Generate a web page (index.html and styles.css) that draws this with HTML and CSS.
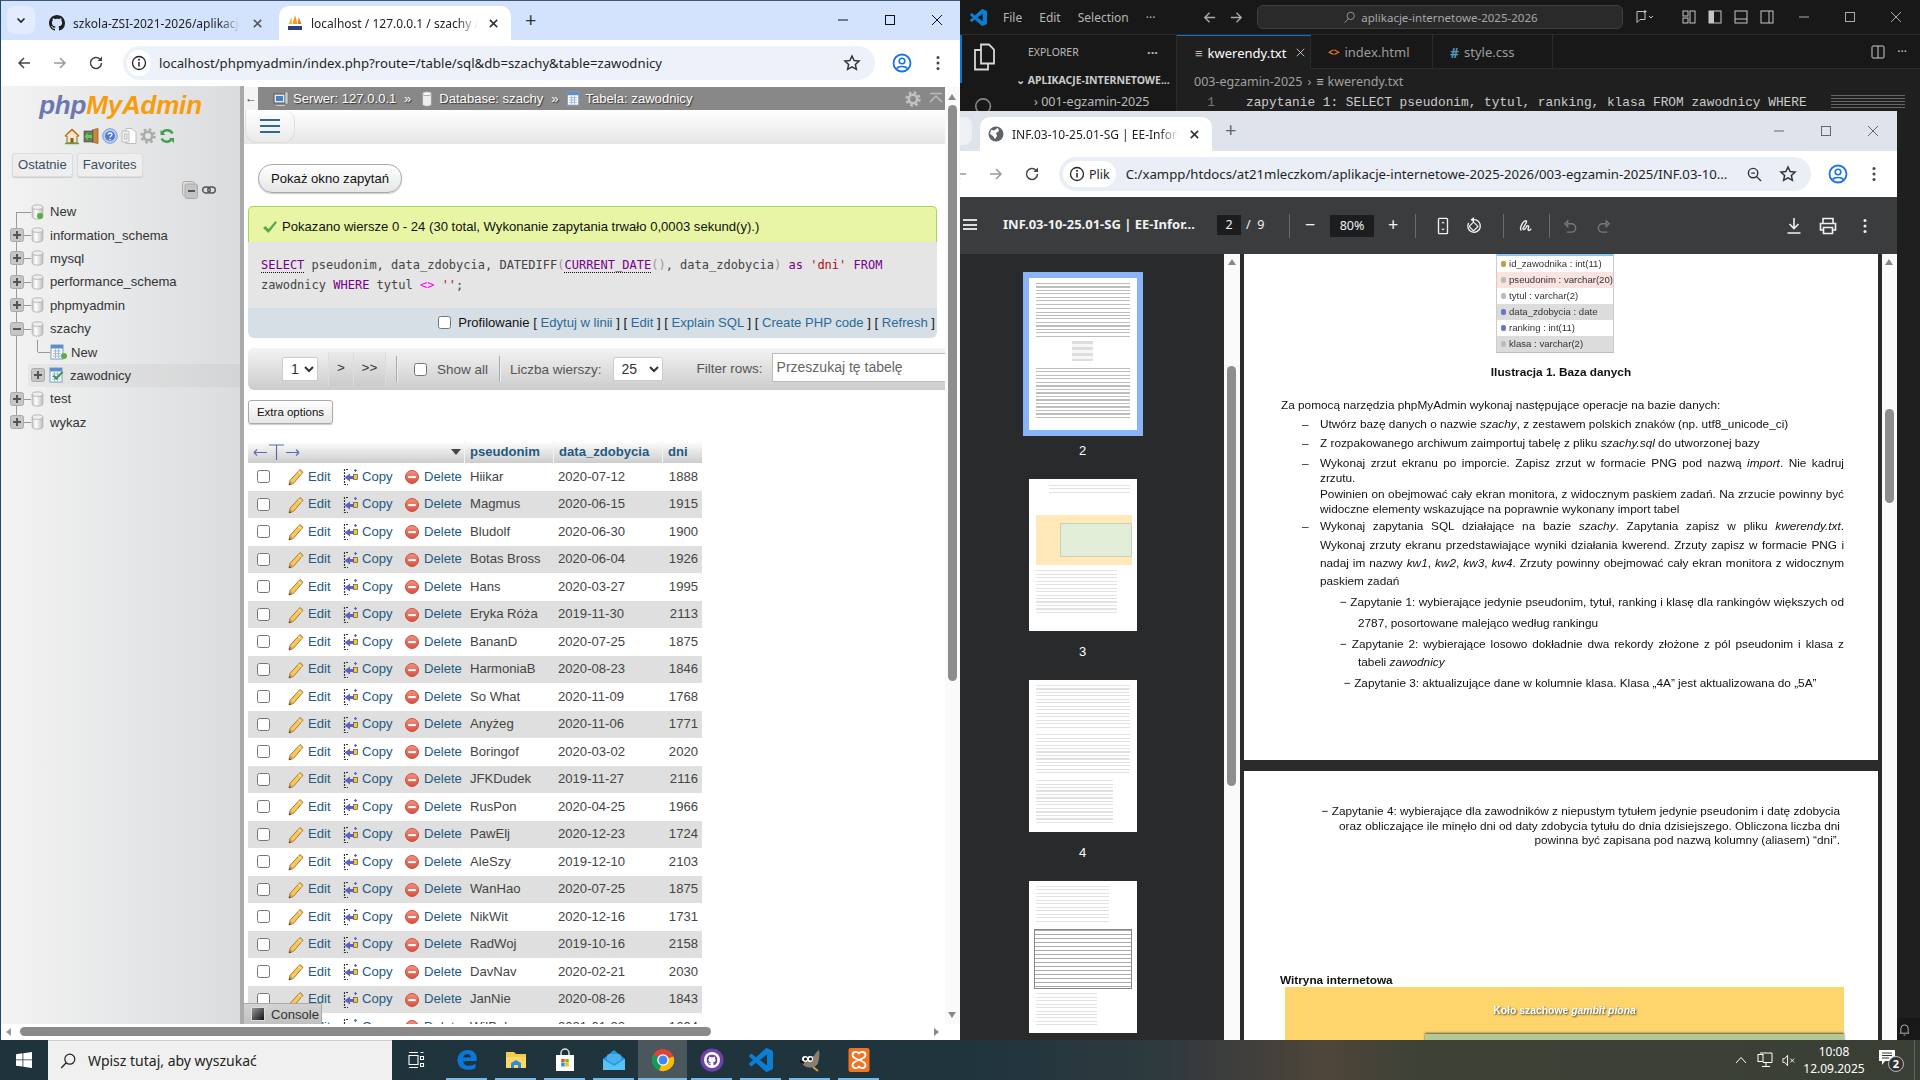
FILE: index.html
```html
<!DOCTYPE html>
<html lang="pl">
<head>
<meta charset="utf-8">
<title>Pulpit</title>
<link rel="stylesheet" href="styles.css">
</head>
<body>
<svg class="defs" width="0" height="0" aria-hidden="true">
  <defs>
    <linearGradient id="gDb" x1="0" x2="1" y1="0" y2="0"><stop offset="0" stop-color="#c9c9c9"/><stop offset=".35" stop-color="#fff"/><stop offset="1" stop-color="#bdbdbd"/></linearGradient>
    <linearGradient id="gRed" x1="0" x2="0" y1="0" y2="1"><stop offset="0" stop-color="#f0907f"/><stop offset="1" stop-color="#d9503f"/></linearGradient>
    <symbol id="pencil" viewBox="0 0 16 18"><path d="M12 1.5l3 2.8L5.3 15.5 1 17l1-4.6z" fill="#f6c95a" stroke="#a9782f" stroke-width="1"/><path d="M10.5 3.5l3 2.8" stroke="#fff0b8"/><path d="M1 17l1-4.6 3.3 3.1z" fill="#c89a66"/><path d="M1 17l.5-2 1.6 1.4z" fill="#4b3517"/></symbol>
    <symbol id="copy" viewBox="0 0 15 18"><path d="M5 1.5H1.5v15H5" fill="none" stroke="#333" stroke-width="1.2" stroke-dasharray="2 1"/><path d="M1.5 9.5l5.5-4v2.5h4v3H7v2.500z" fill="#5f5fd0"/><rect x="10.500" y="6.500" width="4" height="5" fill="#fcc72e" stroke="#555" stroke-width=".7"/><path d="M12.500 1v3M11 2.500h3" stroke="#5f5fd0" stroke-width="1.200"/></symbol>
    <symbol id="del" viewBox="0 0 15 15"><circle cx="7.500" cy="7.500" r="7" fill="url(#gRed)" stroke="#c9503f"/><rect x="3.500" y="6.500" width="8" height="2.200" fill="#fff"/></symbol>
    <symbol id="db" viewBox="0 0 14 18"><path d="M1 3.500v11c0 1.500 2.700 2.500 6 2.500s6-1 6-2.500v-11z" fill="url(#gDb)" stroke="#b0b0b0"/><ellipse cx="7" cy="3.500" rx="6" ry="2.500" fill="#efefef" stroke="#b0b0b0"/></symbol>
    <symbol id="plus-box" viewBox="0 0 14 14"><rect x=".5" y=".5" width="13" height="13" rx="2" fill="#c6c6c6" stroke="#aaa"/><path d="M3 7h8M7 3v8" stroke="#555" stroke-width="2"/></symbol>
    <symbol id="minus-box" viewBox="0 0 14 14"><rect x=".5" y=".5" width="13" height="13" rx="2" fill="#c6c6c6" stroke="#aaa"/><path d="M3 7h8" stroke="#555" stroke-width="2"/></symbol>
    <symbol id="sheet" viewBox="0 0 16 17"><rect x="1" y="1" width="12" height="14" fill="#fff" stroke="#7d9cc0"/><rect x="1" y="1" width="12" height="3.500" fill="#5c8fd0"/><path d="M3 7h8M3 9.500h8M3 12h8M5.500 5v9M8.500 5v9" stroke="#9db6d6"/></symbol>
    <symbol id="gear" viewBox="0 0 16 16"><circle cx="8" cy="8" r="4.200" fill="none" stroke="currentColor" stroke-width="2.600"/><circle cx="8" cy="8" r="6.500" fill="none" stroke="currentColor" stroke-width="2.400" stroke-dasharray="2.550 2.550"/></symbol>
    <symbol id="i-back" viewBox="0 0 16 16"><path d="M14 8H3M8 3L3 8l5 5" fill="none" stroke="currentColor" stroke-width="1.500"/></symbol>
    <symbol id="i-fwd" viewBox="0 0 16 16"><path d="M2 8h11M8 3l5 5-5 5" fill="none" stroke="currentColor" stroke-width="1.500"/></symbol>
    <symbol id="i-reload" viewBox="0 0 16 16"><path d="M13.500 8a5.500 5.500 0 1 1-1.600-3.900" fill="none" stroke="currentColor" stroke-width="1.500"/><path d="M14 1.500V6H9.500z" fill="currentColor"/></symbol>
    <symbol id="i-star" viewBox="0 0 16 16"><path d="M8 1.800l1.900 4 4.400.5-3.300 3 .9 4.400L8 11.500l-3.900 2.200.9-4.400-3.300-3 4.400-.5z" fill="none" stroke="currentColor" stroke-width="1.300"/></symbol>
    <symbol id="i-info" viewBox="0 0 16 16"><circle cx="8" cy="8" r="6.500" fill="none" stroke="currentColor" stroke-width="1.300"/><path d="M8 7v4.500" stroke="currentColor" stroke-width="1.500"/><circle cx="8" cy="4.800" r="1" fill="currentColor"/></symbol>
    <symbol id="i-profile" viewBox="0 0 20 20"><circle cx="10" cy="10" r="8.500" fill="#fff" stroke="#1a73e8" stroke-width="1.800"/><circle cx="10" cy="8" r="2.800" fill="none" stroke="#1a73e8" stroke-width="1.600"/><path d="M4.800 15.500c1.500-2.600 8.900-2.600 10.400 0" fill="none" stroke="#1a73e8" stroke-width="1.600"/></symbol>
    <symbol id="i-dots" viewBox="0 0 4 16"><circle cx="2" cy="2.500" r="1.500" fill="currentColor"/><circle cx="2" cy="8" r="1.500" fill="currentColor"/><circle cx="2" cy="13.500" r="1.500" fill="currentColor"/></symbol>
    <symbol id="i-x" viewBox="0 0 12 12"><path d="M2 2l8 8M10 2l-8 8" stroke="currentColor" stroke-width="1.700"/></symbol>
    <symbol id="i-win-x" viewBox="0 0 12 12"><path d="M1 1l10 10M11 1L1 11" stroke="currentColor" stroke-width="1"/></symbol>
    <symbol id="vs" viewBox="0 0 24 24"><path fill="#0a7fd4" d="M23.150 2.587L18.210.21a1.494 1.494 0 0 0-1.705.29l-9.460 8.630-4.120-3.128a.999.999 0 0 0-1.276.057L.327 7.261A1 1 0 0 0 .326 8.740L3.899 12 .326 15.260a1 1 0 0 0 .001 1.479L1.650 17.940a.999.999 0 0 0 1.276.057l4.120-3.128 9.460 8.630a1.492 1.492 0 0 0 1.704.29l4.942-2.377A1.500 1.500 0 0 0 24 20.060V3.939a1.500 1.500 0 0 0-.85-1.352zm-5.146 14.861L10.826 12l7.178-5.448v10.896z"/></symbol>
    <symbol id="gh" viewBox="0 0 16 16"><path d="M8 0C3.580 0 0 3.580 0 8c0 3.540 2.290 6.530 5.470 7.590.4.070.55-.17.55-.38 0-.19-.01-.82-.01-1.490-2.010.370-2.530-.490-2.690-.940-.090-.230-.480-.940-.820-1.130-.280-.150-.680-.520-.010-.530.630-.010 1.080.580 1.230.820.720 1.210 1.870.870 2.330.660.070-.520.280-.870.510-1.070-1.780-.2-3.640-.890-3.640-3.950 0-.870.310-1.590.820-2.150-.080-.2-.360-1.020.080-2.120 0 0 .670-.210 2.200.820.640-.180 1.320-.270 2-.270.680 0 1.360.090 2 .270 1.530-1.040 2.200-.820 2.200-.820.440 1.100.160 1.920.080 2.120.510.560.820 1.270.820 2.150 0 3.070-1.870 3.750-3.650 3.950.290.250.540.730.540 1.480 0 1.070-.010 1.930-.010 2.200 0 .210.150.460.550.380A8.013 8.013 0 0016 8c0-4.420-3.580-8-8-8z"/></symbol>
    <symbol id="pma" viewBox="0 0 16 16"><path d="M8 0l2.500 9H5.500z" fill="#f59a1b"/><path d="M4.500 2L5 9H1.500z" fill="#f9b34a"/><path d="M11.500 2L14.500 9H11z" fill="#e4761a"/><rect x="1" y="11" width="14" height="4" fill="#2b3f7c"/></symbol>
    <symbol id="cyl" viewBox="0 0 12 18"><path d="M1 3v12c0 1.400 2.200 2.200 5 2.200s5-.8 5-2.200V3z" fill="#eee" stroke="#999"/><ellipse cx="6" cy="3" rx="5" ry="2.200" fill="#fff" stroke="#999"/></symbol>
  </defs>
</svg>

<div class="desktop">

  <!-- Visual Studio Code behind the browsers -->
  <section class="win-code">
    <header class="code-title">
      <svg class="code-logo"><use href="#vs"/></svg>
      <span class="code-menu">File</span><span class="code-menu">Edit</span><span class="code-menu">Selection</span><span class="code-menu">···</span>
      <svg class="code-nav first"><use href="#i-back"/></svg>
      <svg class="code-nav"><use href="#i-fwd"/></svg>
      <div class="command"><svg class="cmd-search" viewBox="0 0 16 16"><circle cx="9.500" cy="6" r="4.500" fill="none" stroke="currentColor"/><path d="M6.500 9.500L2 14.500" stroke="currentColor"/></svg>aplikacje-internetowe-2025-2026</div>
      <div class="code-layout">
        <svg viewBox="0 0 20 16" class="lay wide"><path d="M3 2.500h6l2 1v7H6l-3 3zM11 1v3M9.500 2.500h3" fill="none" stroke="currentColor"/><path d="M19 7l-2 2-2-2" fill="none" stroke="currentColor"/></svg>
        <svg viewBox="0 0 16 16" class="lay"><rect x="2" y="2" width="5" height="5" fill="none" stroke="currentColor"/><rect x="2" y="9" width="5" height="5" fill="none" stroke="currentColor"/><rect x="9" y="2" width="5" height="12" fill="none" stroke="currentColor"/></svg>
        <svg viewBox="0 0 16 16" class="lay"><rect x="2" y="2" width="12" height="12" fill="none" stroke="currentColor"/><rect x="2" y="2" width="5" height="12" fill="currentColor"/></svg>
        <svg viewBox="0 0 16 16" class="lay"><rect x="2" y="2" width="12" height="12" fill="none" stroke="currentColor"/><path d="M2 10h12" stroke="currentColor"/></svg>
        <svg viewBox="0 0 16 16" class="lay"><rect x="2" y="2" width="12" height="12" fill="none" stroke="currentColor"/><path d="M10 2v12" stroke="currentColor"/></svg>
      </div>
      <div class="code-ctl">
        <svg viewBox="0 0 12 12"><path d="M1 6h10" stroke="currentColor"/></svg>
        <svg viewBox="0 0 12 12"><rect x="1.500" y="1.500" width="9" height="9" fill="none" stroke="currentColor"/></svg>
        <svg viewBox="0 0 12 12"><path d="M1 1l10 10M11 1L1 11" stroke="currentColor"/></svg>
      </div>
    </header>
    <div class="code-body">
      <aside class="code-activity">
        <svg class="act-files" viewBox="0 0 24 28"><path d="M9 1.500h8l5 5v14H9zM9 7H3v19.500h13v-6" fill="none" stroke="#d7d7d7" stroke-width="1.800"/></svg>
        <svg class="act-search" viewBox="0 0 24 24"><circle cx="11" cy="10" r="8" fill="none" stroke="#868686" stroke-width="1.800"/></svg>
      </aside>
      <aside class="code-side">
        <div class="side-head"><span>EXPLORER</span><span class="side-dots">···</span></div>
        <div class="side-proj">⌄ APLIKACJE-INTERNETOWE...</div>
        <div class="side-item">› 001-egzamin-2025</div>
      </aside>
      <div class="code-main">
        <div class="code-tabs">
          <div class="ctab active"><span class="txt-ic">≡</span>kwerendy.txt<svg class="ctab-x"><use href="#i-win-x"/></svg></div>
          <div class="ctab t2"><span class="html-ic">&lt;&gt;</span>index.html</div>
          <div class="ctab t3"><span class="css-ic">#</span>style.css</div>
          <div class="ctab-rest"><svg viewBox="0 0 14 14" class="split"><rect x="1" y="1" width="12" height="12" rx="1" fill="none" stroke="currentColor"/><path d="M7 1v12" stroke="currentColor"/></svg><span>···</span></div>
        </div>
        <div class="code-crumb">003-egzamin-2025 <span class="crumb-sep">›</span> <span class="txt-ic">≡</span> kwerendy.txt</div>
        <div class="code-line"><span class="ln-no">1</span><span>zapytanie 1: SELECT pseudonim, tytul, ranking, klasa FROM zawodnicy WHERE</span><span class="minimap"></span></div>
      </div>
    </div>
    <div class="code-bell"><svg viewBox="0 0 12 14"><path d="M2 10V6a4 4 0 0 1 8 0v4l1 1H1zM5 13h2" fill="none" stroke="#bbb"/></svg></div>
  </section>

  <!-- Right browser: PDF -->
  <section class="chrome win-pdf">
    <div class="tabstrip inactive">
      <div class="tab-menu"></div>
      <div class="tab tab-pdf">
        <svg class="fav" viewBox="0 0 16 16"><circle cx="8" cy="8" r="7.500" fill="#5f6368"/><path d="M3 4c2 0 3 1 4 0s2-2 3-2l1 3-3 2 1 3-2 3-2-3-3-2z" fill="#fff"/></svg>
        <span class="tab-title">INF.03-10-25.01-SG | EE-Inform</span>
        <svg class="tab-x"><use href="#i-x"/></svg>
      </div>
      <span class="tab-plus dim">+</span>
      <div class="win-ctl dim">
        <svg viewBox="0 0 12 12"><path d="M1 6h10" stroke="currentColor"/></svg>
        <svg viewBox="0 0 12 12"><rect x="1.500" y="1.500" width="9" height="9" fill="none" stroke="currentColor"/></svg>
        <svg viewBox="0 0 12 12"><use href="#i-win-x"/></svg>
      </div>
    </div>
    <div class="toolbar">
      <svg class="tb back gray"><use href="#i-back"/></svg>
      <svg class="tb fwd gray"><use href="#i-fwd"/></svg>
      <svg class="tb rel"><use href="#i-reload"/></svg>
      <div class="omni omni-pdf">
        <span class="chip"><svg><use href="#i-info"/></svg>Plik</span>
        <span class="url">C:/xampp/htdocs/at21mleczkom/aplikacje-internetowe-2025-2026/003-egzamin-2025/INF.03-10...</span>
        <svg class="omni-zoom" viewBox="0 0 16 16"><circle cx="6.500" cy="6.500" r="5" fill="none" stroke="currentColor" stroke-width="1.500"/><path d="M10 10l5 5M4.500 6.500h4" stroke="currentColor" stroke-width="1.500"/></svg>
        <svg class="omni-star"><use href="#i-star"/></svg>
      </div>
      <svg class="tb-profile"><use href="#i-profile"/></svg>
      <svg class="tb-dots"><use href="#i-dots"/></svg>
    </div>
    <div class="pdfbar">
      <span class="pdf-burger"></span>
      <span class="pdf-title">INF.03-10-25.01-SG | EE-Infor...</span>
      <span class="pdf-page">2</span><span class="pdf-of">/ &nbsp;9</span>
      <i class="pdf-sep s1"></i>
      <span class="pdf-btn pm">−</span><span class="pdf-zoom">80%</span><span class="pdf-btn pp">+</span>
      <i class="pdf-sep s2"></i>
      <svg class="pdf-ic a1" viewBox="0 0 16 20"><rect x="3" y="1.500" width="10" height="17" rx="1" fill="none" stroke="currentColor" stroke-width="1.500"/><path d="M8 5l-2 2h4zM8 15l-2-2h4z" fill="currentColor"/></svg>
      <svg class="pdf-ic a2" viewBox="0 0 20 20"><path d="M10 3a7 7 0 1 1-6 3.500" fill="none" stroke="currentColor" stroke-width="1.500"/><path d="M10 0v6L6 3z" fill="currentColor"/><rect x="6" y="7" width="7" height="7" transform="rotate(45 9.500 10.500)" fill="none" stroke="currentColor" stroke-width="1.300"/></svg>
      <i class="pdf-sep s3"></i>
      <svg class="pdf-ic a3" viewBox="0 0 20 20"><path d="M6 15c-3-2 2-11 5-11 2 0-1 5-3 8-1 2 1 3 3 0 1-2 2-3 3-2 1 1-2 4 0 5 1 0 2-1 3-2" fill="none" stroke="currentColor" stroke-width="1.500"/></svg>
      <i class="pdf-sep s4"></i>
      <svg class="pdf-ic a4 faint" viewBox="0 0 16 16"><path d="M2 5l3-3v6zM5 5h4a4 4 0 0 1 0 9H4" fill="none" stroke="currentColor" stroke-width="1.500"/></svg>
      <svg class="pdf-ic a5 faint" viewBox="0 0 16 16"><path d="M14 5l-3-3v6zM11 5H7a4 4 0 0 0 0 9h5" fill="none" stroke="currentColor" stroke-width="1.500"/></svg>
      <svg class="pdf-ic a6" viewBox="0 0 16 18"><path d="M8 1v10M3.500 7L8 11.500 12.500 7M1.500 16h13" fill="none" stroke="currentColor" stroke-width="1.600"/></svg>
      <svg class="pdf-ic a7" viewBox="0 0 18 18"><path d="M4 6V1.500h10V6M4 13H1.500V6.500h15V13H14M4.500 10.500h9v6h-9z" fill="none" stroke="currentColor" stroke-width="1.600"/></svg>
      <svg class="pdf-ic a8"><use href="#i-dots"/></svg>
    </div>
    <div class="pdf-body">
      <aside class="thumbs">
        <div class="thumb current">
          <div class="tpage"><div class="tl dark tl-a"></div><div class="tl dark tl-a2"></div><div class="ttable"></div><div class="tl dark tl-b"></div></div>
        </div>
        <div class="tnum">2</div>
        <div class="thumb">
          <div class="tpage"><div class="tl tl-c"></div><div class="tyellow"><div class="tgreen"></div></div><div class="tl tl-d"></div></div>
        </div>
        <div class="tnum">3</div>
        <div class="thumb">
          <div class="tpage"><div class="tl tl-e"></div><div class="tl tl-e2"></div><div class="tl tl-e3"></div></div>
        </div>
        <div class="tnum">4</div>
        <div class="thumb">
          <div class="tpage"><div class="tl tl-f"></div><div class="tgrid"></div><div class="tl tl-g"></div></div>
        </div>
      </aside>
      <div class="vbar narrow"><span class="arr-up"></span><span class="thumb-bar tb1"></span></div>
      <main class="pages">
        <article class="page page1">
          <div class="schema">
            <div class="sc"><i class="k1"></i>id_zawodnika : int(11)</div>
            <div class="sc pink"><i></i>pseudonim : varchar(20)</div>
            <div class="sc"><i></i>tytul : varchar(2)</div>
            <div class="sc grey"><i class="k2"></i>data_zdobycia : date</div>
            <div class="sc"><i class="k2"></i>ranking : int(11)</div>
            <div class="sc grey"><i></i>klasa : varchar(2)</div>
          </div>
          <p class="caption">Ilustracja 1. Baza danych</p>
          <p class="ln lead">Za pomocą narzędzia phpMyAdmin wykonaj następujące operacje na bazie danych:</p>
          <p class="ln g4 li">Utwórz bazę danych o nazwie <em>szachy</em>, z zestawem polskich znaków (np. utf8_unicode_ci)</p>
          <p class="ln g5 li">Z rozpakowanego archiwum zaimportuj tabelę z pliku <em>szachy.sql</em> do utworzonej bazy</p>
          <p class="ln g6 li just">Wykonaj zrzut ekranu po imporcie. Zapisz zrzut w formacie PNG pod nazwą <em>import</em>. Nie kadruj</p>
          <p class="ln g1 cont">zrzutu.</p>
          <p class="ln g2 cont just">Powinien on obejmować cały ekran monitora, z widocznym paskiem zadań. Na zrzucie powinny być</p>
          <p class="ln g1 cont">widoczne elementy wskazujące na poprawnie wykonany import tabel</p>
          <p class="ln g3 li just">Wykonaj zapytania SQL działające na bazie <em>szachy</em>. Zapytania zapisz w pliku <em>kwerendy.txt</em>.</p>
          <p class="ln g5 cont just">Wykonaj zrzuty ekranu przedstawiające wyniki działania kwerend. Zrzuty zapisz w formacie PNG i</p>
          <p class="ln g4 cont just">nadaj im nazwy <em>kw1</em>, <em>kw2</em>, <em>kw3</em>, <em>kw4</em>. Zrzuty powinny obejmować cały ekran monitora z widocznym</p>
          <p class="ln g4 cont">paskiem zadań</p>
          <p class="ln g7 q1 just">− Zapytanie 1: wybierające jedynie pseudonim, tytuł, ranking i klasę dla rankingów większych od</p>
          <p class="ln g7 q2">2787, posortowane malejąco według rankingu</p>
          <p class="ln g7 q1 just">− Zapytanie 2: wybierające losowo dokładnie dwa rekordy złożone z pól pseudonim i klasa z</p>
          <p class="ln g4 q2">tabeli <em>zawodnicy</em></p>
          <p class="ln g7 q3">− Zapytanie 3: aktualizujące dane w kolumnie klasa. Klasa „4A” jest aktualizowana do „5A”</p>
        </article>
        <article class="page page2">
          <p class="ln right r1">− Zapytanie 4: wybierające dla zawodników z niepustym tytułem jedynie pseudonim i datę zdobycia</p>
          <p class="ln right g1">oraz obliczające ile minęło dni od daty zdobycia tytułu do dnia dzisiejszego. Obliczona liczba dni</p>
          <p class="ln right g0">powinna być zapisana pod nazwą kolumny (aliasem) “dni”.</p>
          <p class="ln witryna">Witryna internetowa</p>
          <div class="shot">
            <div class="shot-title">Koło szachowe <em>gambit piona</em></div>
            <div class="shot-green"></div>
          </div>
        </article>
      </main>
      <div class="vbar"><span class="arr-up"></span><span class="thumb-bar tb2"></span></div>
    </div>
  </section>

  <!-- Left browser: phpMyAdmin -->
  <section class="chrome win-left">
    <div class="tabstrip">
      <div class="tab-menu"><svg viewBox="0 0 12 12"><path d="M2.500 4.500L6 8l3.500-3.500" fill="none" stroke="#222" stroke-width="1.600"/></svg></div>
      <div class="tab tab-gh">
        <svg class="fav"><use href="#gh"/></svg>
        <span class="tab-title">szkola-ZSI-2021-2026/aplikacje</span>
        <svg class="tab-x"><use href="#i-x"/></svg>
      </div>
      <div class="tab tab-active">
        <svg class="fav"><use href="#pma"/></svg>
        <span class="tab-title">localhost / 127.0.0.1 / szachy / z</span>
        <svg class="tab-x"><use href="#i-x"/></svg>
      </div>
      <span class="tab-plus">+</span>
      <div class="win-ctl">
        <svg viewBox="0 0 12 12"><path d="M1 6h10" stroke="currentColor"/></svg>
        <svg viewBox="0 0 12 12"><rect x="1.500" y="1.500" width="9" height="9" fill="none" stroke="currentColor"/></svg>
        <svg viewBox="0 0 12 12"><use href="#i-win-x"/></svg>
      </div>
    </div>
    <div class="toolbar">
      <svg class="tb back"><use href="#i-back"/></svg>
      <svg class="tb fwd gray"><use href="#i-fwd"/></svg>
      <svg class="tb rel"><use href="#i-reload"/></svg>
      <div class="omni">
        <span class="chip round"><svg><use href="#i-info"/></svg></span>
        <span class="url">localhost/phpmyadmin/index.php?route=/table/sql&amp;db=szachy&amp;table=zawodnicy</span>
        <svg class="omni-star"><use href="#i-star"/></svg>
      </div>
      <svg class="tb-profile"><use href="#i-profile"/></svg>
      <svg class="tb-dots"><use href="#i-dots"/></svg>
    </div>

    <div class="viewport">
      <div class="viewport-row">
        <nav class="pma-nav">
          <div class="logo"><span class="l-php">php</span><span class="l-my">MyAdmin</span></div>
          <div class="nav-icons">
            <svg viewBox="0 0 16 16"><path d="M1 8l7-6.500L15 8h-2v7H3V8z" fill="#f5e6c8" stroke="#9a6a2a"/><path d="M1 8l7-6.500L15 8" fill="none" stroke="#c0701f" stroke-width="1.500"/><path d="M1 15.500h14" stroke="#5da03a" stroke-width="1.500"/><rect x="6.500" y="10" width="3" height="5" fill="#8a6030"/></svg>
            <svg viewBox="0 0 16 16"><path d="M9 2l6-1.500v15L9 14z" fill="#c88a3a" stroke="#8a5a1a" stroke-width=".7"/><rect x="1" y="3" width="9" height="11" fill="#6a7a5a" stroke="#444" stroke-width=".6"/><path d="M8 8.500H2M5 5L1.500 8.500 5 12V10h4V7H5z" fill="#5fcf4f"/></svg>
            <svg viewBox="0 0 16 16"><circle cx="8" cy="8" r="7.300" fill="#b9cdf0" stroke="#7f9bd0"/><circle cx="8" cy="8" r="5" fill="#4f7bd0"/><path d="M6 6.500C6 4.500 10 4.500 10 6.500c0 1.500-2 1.500-2 3" fill="none" stroke="#fff" stroke-width="1.300"/><circle cx="8" cy="11.500" r=".8" fill="#fff"/></svg>
            <svg viewBox="0 0 16 16"><path d="M5 .5h6l4 4v11H5z" fill="#fff" stroke="#bbb"/><rect x="1" y="3" width="7" height="11" rx="1" fill="#f4f4f4" stroke="#bbb"/><rect x="3.500" y="6" width="2.500" height="5" fill="none" stroke="#bbb"/></svg>
            <svg class="g-nav"><use href="#gear"/></svg>
            <svg viewBox="0 0 16 16"><path d="M13.500 5.500A6 6 0 0 0 3 5M2.500 10.500A6 6 0 0 0 12 12" fill="none" stroke="#3fa24a" stroke-width="2.500"/><path d="M1.500 2v5h5zM15 15v-5h-5z" fill="#3fa24a"/></svg>
          </div>
          <div class="nav-tabs"><span class="ntab">Ostatnie</span><span class="ntab">Favorites</span></div>
          <div class="nav-tools">
            <svg class="ct" viewBox="0 0 16 18"><rect x=".5" y=".5" width="12" height="14" rx="2" fill="#ddd" stroke="#aaa"/><rect x="3" y="3" width="12.500" height="14.500" rx="2" fill="#c4c4c4" stroke="#aaa"/><path d="M6 10h7" stroke="#555" stroke-width="2"/></svg>
            <svg class="lk" viewBox="0 0 14 10"><rect x=".7" y="2" width="7.500" height="6" rx="3" fill="none" stroke="#555" stroke-width="1.400"/><rect x="5.800" y="2" width="7.500" height="6" rx="3" fill="none" stroke="#555" stroke-width="1.400"/></svg>
          </div>
          <ul class="tree">
            <li class="t-row"><span class="t-box"></span><svg class="t-db"><use href="#db"/></svg><span class="t-plus"></span><a>New</a></li>
            <li class="t-row"><svg class="t-box"><use href="#plus-box"/></svg><svg class="t-db"><use href="#db"/></svg><a>information_schema</a></li>
            <li class="t-row"><svg class="t-box"><use href="#plus-box"/></svg><svg class="t-db"><use href="#db"/></svg><a>mysql</a></li>
            <li class="t-row"><svg class="t-box"><use href="#plus-box"/></svg><svg class="t-db"><use href="#db"/></svg><a>performance_schema</a></li>
            <li class="t-row"><svg class="t-box"><use href="#plus-box"/></svg><svg class="t-db"><use href="#db"/></svg><a>phpmyadmin</a></li>
            <li class="t-row"><svg class="t-box"><use href="#minus-box"/></svg><svg class="t-db"><use href="#db"/></svg><a>szachy</a></li>
            <li class="t-row sub"><svg class="t-sheet"><use href="#sheet"/></svg><span class="t-plus sm"></span><a>New</a></li>
            <li class="t-row sub sel"><svg class="t-box"><use href="#plus-box"/></svg><svg class="t-sheet tight"><use href="#sheet"/></svg><span class="t-check"></span><a>zawodnicy</a></li>
            <li class="t-row"><svg class="t-box"><use href="#plus-box"/></svg><svg class="t-db"><use href="#db"/></svg><a>test</a></li>
            <li class="t-row"><svg class="t-box"><use href="#plus-box"/></svg><svg class="t-db"><use href="#db"/></svg><a>wykaz</a></li>
          </ul>
        </nav>
        <div class="splitter"></div>
        <main class="pma-main">
          <div class="crumbs">
            <span class="crumb-back">←</span>
            <svg class="c-ic srv" viewBox="0 0 16 16"><rect x="1" y="3" width="11" height="9" fill="#dfe8f5" stroke="#555"/><rect x="3" y="5" width="7" height="5" fill="#4a7fc0"/><rect x="12" y="1" width="3" height="12" fill="#ccc" stroke="#777" stroke-width=".6"/><path d="M3 14.500h9" stroke="#ccc"/></svg>
            <span class="c-t c-srv">Serwer: 127.0.0.1</span><span class="c-sep">»</span>
            <svg class="c-ic dbi"><use href="#cyl"/></svg>
            <span class="c-t c-dbn">Database: szachy</span><span class="c-sep">»</span>
            <svg class="c-ic tbi"><use href="#sheet"/></svg>
            <span class="c-t">Tabela: zawodnicy</span>
            <svg class="c-gear"><use href="#gear"/></svg>
            <svg class="c-coll" viewBox="0 0 14 14"><path d="M1 1.500h12M1 10l6-6 6 6" fill="none" stroke="#bbb" stroke-width="1.500"/></svg>
          </div>
          <div class="menubar"><div class="burger"><i></i><i></i><i></i></div></div>
          <div class="pma-content">
            <button class="pill">Pokaż okno zapytań</button>
            <div class="msg-ok"><svg viewBox="0 0 16 14"><path d="M1 8l2.500-2 3 3L13.500 1 15 2.500 6.500 13z" fill="#5aa84a"/></svg>Pokazano wiersze 0 - 24 (30 total, Wykonanie zapytania trwało 0,0003 sekund(y).)</div>
            <div class="sql">
              <code><b class="kw u">SELECT</b> pseudonim, data_zdobycia, DATEDIFF<span class="par">(</span><b class="fn u">CURRENT_DATE</b><span class="par">()</span>, data_zdobycia<span class="par">)</span> <b class="kw">as</b> <span class="str">'dni'</span> <b class="kw">FROM</b></code>
              <code>zawodnicy <b class="kw">WHERE</b> tytul <span class="op">&lt;&gt;</span> <span class="str">''</span>;</code>
            </div>
            <div class="sql-links"><input type="checkbox" class="prof-cb"><span class="prof">Profilowanie</span> [ <a>Edytuj w linii</a> ] [ <a>Edit</a> ] [ <a>Explain SQL</a> ] [ <a>Create PHP code</a> ] [ <a>Refresh</a> ]</div>
            <div class="pager">
              <select class="sel-page"><option>1</option></select>
              <div class="pg-btns"><span>&gt;</span><span>&gt;&gt;</span></div>
              <i class="pg-sep sp1"></i>
              <input type="checkbox" class="pg-cb"><span class="pg-t">Show all</span>
              <i class="pg-sep sp2"></i>
              <span class="pg-t">Liczba wierszy:</span>
              <select class="sel-rows"><option>25</option></select>
              <span class="pg-t filter">Filter rows:</span>
              <input class="filter-in" placeholder="Przeszukaj tę tabelę">
            </div>
            <button class="extra">Extra options</button>
            <div class="grid">
              <div class="row head">
                <div class="h-actions"><svg class="t-arrows" viewBox="0 0 47 16"><path d="M1 8.500h13M1 8.500l3-3M1 8.500l3 3M33 8.500h13M46 8.500l-3-3M46 8.500l-3 3M16 1h15M23.500 1v15" fill="none" stroke="#5b6bb0" stroke-width="1.200"/></svg><i class="sort"></i></div>
                <div class="h-c">pseudonim</div><div class="h-c">data_zdobycia</div><div class="h-c">dni</div>
              </div>
              <div class="row"><div class="c-cb"><input type="checkbox"></div><a class="ac ed"><svg><use href="#pencil"/></svg>Edit</a><a class="ac cp"><svg><use href="#copy"/></svg>Copy</a><a class="ac dl"><svg><use href="#del"/></svg>Delete</a><span class="d n">Hiikar</span><span class="d dt">2020-07-12</span><span class="d num">1888</span></div>
              <div class="row"><div class="c-cb"><input type="checkbox"></div><a class="ac ed"><svg><use href="#pencil"/></svg>Edit</a><a class="ac cp"><svg><use href="#copy"/></svg>Copy</a><a class="ac dl"><svg><use href="#del"/></svg>Delete</a><span class="d n">Magmus</span><span class="d dt">2020-06-15</span><span class="d num">1915</span></div>
              <div class="row"><div class="c-cb"><input type="checkbox"></div><a class="ac ed"><svg><use href="#pencil"/></svg>Edit</a><a class="ac cp"><svg><use href="#copy"/></svg>Copy</a><a class="ac dl"><svg><use href="#del"/></svg>Delete</a><span class="d n">Bludolf</span><span class="d dt">2020-06-30</span><span class="d num">1900</span></div>
              <div class="row"><div class="c-cb"><input type="checkbox"></div><a class="ac ed"><svg><use href="#pencil"/></svg>Edit</a><a class="ac cp"><svg><use href="#copy"/></svg>Copy</a><a class="ac dl"><svg><use href="#del"/></svg>Delete</a><span class="d n">Botas Bross</span><span class="d dt">2020-06-04</span><span class="d num">1926</span></div>
              <div class="row"><div class="c-cb"><input type="checkbox"></div><a class="ac ed"><svg><use href="#pencil"/></svg>Edit</a><a class="ac cp"><svg><use href="#copy"/></svg>Copy</a><a class="ac dl"><svg><use href="#del"/></svg>Delete</a><span class="d n">Hans</span><span class="d dt">2020-03-27</span><span class="d num">1995</span></div>
              <div class="row"><div class="c-cb"><input type="checkbox"></div><a class="ac ed"><svg><use href="#pencil"/></svg>Edit</a><a class="ac cp"><svg><use href="#copy"/></svg>Copy</a><a class="ac dl"><svg><use href="#del"/></svg>Delete</a><span class="d n">Eryka Róża</span><span class="d dt">2019-11-30</span><span class="d num">2113</span></div>
              <div class="row"><div class="c-cb"><input type="checkbox"></div><a class="ac ed"><svg><use href="#pencil"/></svg>Edit</a><a class="ac cp"><svg><use href="#copy"/></svg>Copy</a><a class="ac dl"><svg><use href="#del"/></svg>Delete</a><span class="d n">BananD</span><span class="d dt">2020-07-25</span><span class="d num">1875</span></div>
              <div class="row"><div class="c-cb"><input type="checkbox"></div><a class="ac ed"><svg><use href="#pencil"/></svg>Edit</a><a class="ac cp"><svg><use href="#copy"/></svg>Copy</a><a class="ac dl"><svg><use href="#del"/></svg>Delete</a><span class="d n">HarmoniaB</span><span class="d dt">2020-08-23</span><span class="d num">1846</span></div>
              <div class="row"><div class="c-cb"><input type="checkbox"></div><a class="ac ed"><svg><use href="#pencil"/></svg>Edit</a><a class="ac cp"><svg><use href="#copy"/></svg>Copy</a><a class="ac dl"><svg><use href="#del"/></svg>Delete</a><span class="d n">So What</span><span class="d dt">2020-11-09</span><span class="d num">1768</span></div>
              <div class="row"><div class="c-cb"><input type="checkbox"></div><a class="ac ed"><svg><use href="#pencil"/></svg>Edit</a><a class="ac cp"><svg><use href="#copy"/></svg>Copy</a><a class="ac dl"><svg><use href="#del"/></svg>Delete</a><span class="d n">Anyżeg</span><span class="d dt">2020-11-06</span><span class="d num">1771</span></div>
              <div class="row"><div class="c-cb"><input type="checkbox"></div><a class="ac ed"><svg><use href="#pencil"/></svg>Edit</a><a class="ac cp"><svg><use href="#copy"/></svg>Copy</a><a class="ac dl"><svg><use href="#del"/></svg>Delete</a><span class="d n">Boringof</span><span class="d dt">2020-03-02</span><span class="d num">2020</span></div>
              <div class="row"><div class="c-cb"><input type="checkbox"></div><a class="ac ed"><svg><use href="#pencil"/></svg>Edit</a><a class="ac cp"><svg><use href="#copy"/></svg>Copy</a><a class="ac dl"><svg><use href="#del"/></svg>Delete</a><span class="d n">JFKDudek</span><span class="d dt">2019-11-27</span><span class="d num">2116</span></div>
              <div class="row"><div class="c-cb"><input type="checkbox"></div><a class="ac ed"><svg><use href="#pencil"/></svg>Edit</a><a class="ac cp"><svg><use href="#copy"/></svg>Copy</a><a class="ac dl"><svg><use href="#del"/></svg>Delete</a><span class="d n">RusPon</span><span class="d dt">2020-04-25</span><span class="d num">1966</span></div>
              <div class="row"><div class="c-cb"><input type="checkbox"></div><a class="ac ed"><svg><use href="#pencil"/></svg>Edit</a><a class="ac cp"><svg><use href="#copy"/></svg>Copy</a><a class="ac dl"><svg><use href="#del"/></svg>Delete</a><span class="d n">PawElj</span><span class="d dt">2020-12-23</span><span class="d num">1724</span></div>
              <div class="row"><div class="c-cb"><input type="checkbox"></div><a class="ac ed"><svg><use href="#pencil"/></svg>Edit</a><a class="ac cp"><svg><use href="#copy"/></svg>Copy</a><a class="ac dl"><svg><use href="#del"/></svg>Delete</a><span class="d n">AleSzy</span><span class="d dt">2019-12-10</span><span class="d num">2103</span></div>
              <div class="row"><div class="c-cb"><input type="checkbox"></div><a class="ac ed"><svg><use href="#pencil"/></svg>Edit</a><a class="ac cp"><svg><use href="#copy"/></svg>Copy</a><a class="ac dl"><svg><use href="#del"/></svg>Delete</a><span class="d n">WanHao</span><span class="d dt">2020-07-25</span><span class="d num">1875</span></div>
              <div class="row"><div class="c-cb"><input type="checkbox"></div><a class="ac ed"><svg><use href="#pencil"/></svg>Edit</a><a class="ac cp"><svg><use href="#copy"/></svg>Copy</a><a class="ac dl"><svg><use href="#del"/></svg>Delete</a><span class="d n">NikWit</span><span class="d dt">2020-12-16</span><span class="d num">1731</span></div>
              <div class="row"><div class="c-cb"><input type="checkbox"></div><a class="ac ed"><svg><use href="#pencil"/></svg>Edit</a><a class="ac cp"><svg><use href="#copy"/></svg>Copy</a><a class="ac dl"><svg><use href="#del"/></svg>Delete</a><span class="d n">RadWoj</span><span class="d dt">2019-10-16</span><span class="d num">2158</span></div>
              <div class="row"><div class="c-cb"><input type="checkbox"></div><a class="ac ed"><svg><use href="#pencil"/></svg>Edit</a><a class="ac cp"><svg><use href="#copy"/></svg>Copy</a><a class="ac dl"><svg><use href="#del"/></svg>Delete</a><span class="d n">DavNav</span><span class="d dt">2020-02-21</span><span class="d num">2030</span></div>
              <div class="row"><div class="c-cb"><input type="checkbox"></div><a class="ac ed"><svg><use href="#pencil"/></svg>Edit</a><a class="ac cp"><svg><use href="#copy"/></svg>Copy</a><a class="ac dl"><svg><use href="#del"/></svg>Delete</a><span class="d n">JanNie</span><span class="d dt">2020-08-26</span><span class="d num">1843</span></div>
              <div class="row"><div class="c-cb"><input type="checkbox"></div><a class="ac ed"><svg><use href="#pencil"/></svg>Edit</a><a class="ac cp"><svg><use href="#copy"/></svg>Copy</a><a class="ac dl"><svg><use href="#del"/></svg>Delete</a><span class="d n">WilBak</span><span class="d dt">2021-01-23</span><span class="d num">1694</span></div>
            </div>
          </div>
          <div class="console"><i class="con-ic"></i>Console</div>
        </main>
        <div class="vbar main-v"><span class="arr-up"></span><span class="thumb-bar tb3"></span><span class="arr-down"></span></div>
      </div>
      <div class="hbar"><span class="arr-l"></span><span class="hthumb"></span><span class="arr-r"></span></div>
    </div>
  </section>

  <!-- Taskbar -->
  <footer class="taskbar">
    <svg class="start" viewBox="0 0 16 16"><path fill="#fff" d="M0 2.200L6.500 1.300v6.200H0zM7.300 1.200L16 0v7.500H7.300zM0 8.300h6.500v6.300L0 13.700zM7.300 8.300H16V16l-8.700-1.200z"/></svg>
    <div class="search"><svg viewBox="0 0 16 16"><circle cx="9.800" cy="6.200" r="5" fill="none" stroke="#222" stroke-width="1.200"/><path d="M6.200 9.800L1.200 15" stroke="#222" stroke-width="1.300"/></svg><span>Wpisz tutaj, aby wyszukać</span></div>
    <svg class="task-view" viewBox="0 0 16 18"><path d="M1 1.500h9M1 16.500h9M1 4.500h9v9H1zM12.500 1.500h3M12.500 5.500h3v3h-3zM12.500 12.500h3v3h-3z" fill="none" stroke="#fff" stroke-width="1.100"/></svg>
    <div class="apps">
      <span class="app pin"><svg viewBox="0 0 24 24"><path d="M21.500 13H8c.2 3 2.600 4.800 5.700 4.800 2.600 0 5-.8 6.800-2.200v4.300c-2.100 1.300-4.700 1.900-7.600 1.900C7 21.800 2.500 18.200 2.500 12.300 2.500 6 7.200 2 13 2c5.600 0 8.800 4 8.800 9.200zM15.800 9.500c0-2.200-1.300-3.600-3.300-3.600-2.100 0-3.800 1.400-4.300 3.600z" fill="#0a78d7"/></svg></span>
      <span class="app pin"><svg viewBox="0 0 24 24"><path d="M2 4h8l2 2h10v14H2z" fill="#f7c94a"/><path d="M2 9h20v11H2z" fill="#fbd76a"/><path d="M7 20v-5l5-3 5 3v5h-3v-3h-4v3z" fill="#2b8fd8"/></svg></span>
      <span class="app pin"><svg viewBox="0 0 24 24"><path d="M8 8V5a4 4 0 0 1 8 0v3" fill="none" stroke="#ddd" stroke-width="1.500"/><rect x="3" y="7" width="18" height="16" fill="#fff"/><rect x="8.200" y="11" width="3.500" height="3.500" fill="#f25022"/><rect x="12.300" y="11" width="3.500" height="3.500" fill="#7fba00"/><rect x="8.200" y="15" width="3.500" height="3.500" fill="#00a4ef"/><rect x="12.300" y="15" width="3.500" height="3.500" fill="#ffb900"/></svg></span>
      <span class="app pin"><svg viewBox="0 0 24 24"><path d="M1 11L12 2l11 9v11H1z" fill="#1e9ce8"/><path d="M1 11l11 7 11-7v11H1z" fill="#5cc2f5"/><path d="M5 6h14v6l-7 4-7-4z" fill="#fff" opacity=".2"/></svg></span>
      <span class="app active pin-wide"><svg viewBox="0 0 24 24"><circle cx="12" cy="12" r="11" fill="#db4437"/><path d="M12 12L22.500 8.500A11 11 0 0 1 8 22.300z" fill="#fbbc05"/><path d="M12 12L8 22.300A11 11 0 0 1 2.500 6.500z" fill="#0f9d58"/><circle cx="12" cy="12" r="5.800" fill="#fff"/><circle cx="12" cy="12" r="4.500" fill="#4285f4"/></svg></span>
      <span class="app pin"><svg viewBox="0 0 24 24"><circle cx="12" cy="12" r="11.500" fill="#6f42a8"/><circle cx="12" cy="12" r="8" fill="#fff"/><g transform="translate(6.500 6.500) scale(.69)"><use href="#gh" width="16" height="16" fill="#6f42a8"/></g></svg></span>
      <span class="app pin"><svg><use href="#vs"/></svg></span>
      <span class="app pin"><svg viewBox="0 0 24 24"><path d="M4 15c0-5 8-7 12-7 1-2 3-5 5-6 1 5 0 9-1 13-1 5-13 7-16 0z" fill="#8a7f6e"/><circle cx="7" cy="11" r="3" fill="#fff"/><circle cx="12" cy="11" r="3" fill="#fff"/><circle cx="7.500" cy="11" r="1.500" fill="#111"/><circle cx="12.500" cy="11" r="1.500" fill="#111"/><path d="M2 13l4 2" stroke="#111" stroke-width="2"/><path d="M15 19l5 4" stroke="#caa04a" stroke-width="2"/></svg></span>
      <span class="app pin"><svg viewBox="0 0 24 24"><rect x="1.500" y="0" width="21" height="24" rx="2" fill="#f07422"/><path d="M12 5.500C10 3 5.500 3.500 5.500 7c0 2.500 2.500 3.500 6.500 5 4 1.500 6.500 2.500 6.500 5 0 3.500-4.500 4-6.500 1.500C10 21 5.500 20.500 5.500 17c0-2.500 2.500-3.500 6.500-5 4-1.500 6.500-2.500 6.500-5 0-3.500-4.500-4-6.500-1.500z" fill="none" stroke="#fff" stroke-width="1.800"/></svg></span>
    </div>
    <div class="tray">
      <svg class="tr-up" viewBox="0 0 12 8"><path d="M1 7l5-5.500L11 7" fill="none" stroke="#fff"/></svg>
      <svg class="tr-net" viewBox="0 0 16 16"><path d="M3 1h12v9.500H6M9 10.500v4M5 14.500h8" fill="none" stroke="#fff"/><rect x="1" y="2.500" width="5" height="7" fill="none" stroke="#fff"/></svg>
      <svg class="tr-vol" viewBox="0 0 16 16"><path d="M2 6v4h2l3 3.500v-11L4 6z" fill="none" stroke="#fff"/><path d="M10 6l4 4M14 6l-4 4" stroke="#fff"/></svg>
      <div class="clock"><span>10:08</span><span>12.09.2025</span></div>
      <div class="notif"><svg viewBox="0 0 16 16"><path d="M0 0h16v11H6l-3 4v-4H0z" fill="#fff"/><path d="M3 3h10M3 5.500h10M3 8h7" stroke="#333"/></svg><span class="badge">2</span></div>
      <i class="showdesk"></i>
    </div>
  </footer>
</div>
</body>
</html>
```

FILE: styles.css
```css
*{box-sizing:border-box}
html,body{margin:0;padding:0;height:100%}
p{margin:0}
body{font-family:"Liberation Sans",Arial,sans-serif;font-size:13.1px;color:#444;overflow:hidden;background:#1f1f1f}
.defs{position:absolute}
svg{display:block;overflow:visible}
.desktop{position:relative;width:1920px;height:1080px;overflow:hidden}

/* VS Code */
.win-code{position:absolute;left:960px;top:0;width:960px;height:1040px;background:#1f1f1f;color:#ccc;font-family:"Noto Sans",sans-serif;font-size:12px}
.code-title{height:35px;background:#181818;border-bottom:1px solid #2b2b2b;display:flex;align-items:center;padding-left:10px;color:#b5b5b5}
.code-logo{width:17px;height:17px;margin-right:16px}
.code-menu{margin-right:17px;font-size:12px}
.code-nav{width:15px;height:15px;color:#aaa}
.code-nav.first{margin-left:30px;margin-right:12px}
.command{width:366px;height:24px;margin-left:13px;border:1px solid #3f3f3f;border-radius:6px;background:#2a2a2a;display:flex;align-items:center;justify-content:center;gap:5px;color:#a8a8a8;font-size:11.5px}
.cmd-search{width:13px;height:13px}
.code-layout{display:flex;align-items:center;gap:10px;margin-left:11px;color:#c5c5c5}
.lay{width:16px;height:16px}
.lay.wide{width:20px;margin-right:17px}
.code-ctl{display:flex;gap:34px;margin-left:auto;margin-right:18px;color:#aaa}
.code-ctl svg{width:12px;height:12px}
.code-body{display:flex;height:100px}
.code-activity{width:48px;background:#181818;position:relative;flex:none;display:flex;flex-direction:column;align-items:center;padding-top:8px}
.code-activity::before{content:"";position:absolute;left:0;top:0;width:2px;height:48px;background:#0078d4}
.act-files{width:24px;height:28px}
.act-search{width:22px;height:22px;margin-top:26px}
.code-side{width:169px;background:#181818;flex:none;border-right:1px solid #2b2b2b}
.side-head{display:flex;justify-content:space-between;padding:10px 18px 0 20px;font-size:10.5px;color:#bbb;height:37px}
.side-dots{font-size:13px;line-height:14px;font-weight:700}
.side-proj{font-weight:700;font-size:10.5px;padding-left:8px;white-space:nowrap;color:#ccc;line-height:16px}
.side-item{padding-left:26px;margin-top:5px;font-size:12.5px;color:#bbb}
.code-main{flex:1;min-width:0}
.code-tabs{display:flex;height:34px;background:#181818;border-bottom:1px solid #2b2b2b}
.ctab{display:flex;align-items:center;height:34px;border-right:1px solid #2b2b2b;padding-left:17px;font-size:13px;color:#9d9d9d;width:122px;gap:5px}
.ctab.active{width:134px;background:#1f1f1f;color:#fff;border-top:1px solid #0078d4;padding-left:18px}
.ctab.t3{width:120px}
.ctab-x{width:9px;height:9px;color:#eee;margin-left:5px}
.txt-ic{color:#bbb;font-weight:700}
.html-ic{color:#e37933;font-size:10px;font-weight:700}
.css-ic{color:#519aba;font-weight:700;font-size:14px}
.ctab-rest{flex:1;display:flex;justify-content:flex-end;align-items:center;gap:12px;padding-right:13px;color:#ccc}
.split{width:14px;height:14px}
.code-crumb{height:22px;display:flex;align-items:center;gap:4px;padding-left:17px;font-size:12.5px;color:#a0a0a0;margin-top:1px}
.crumb-sep{margin:0 1px}
.code-line{display:flex;align-items:center;font-family:"Liberation Mono",monospace;font-size:12.8px;height:20px;color:#ccc;white-space:nowrap}
.ln-no{width:69px;text-align:right;padding-right:31px;color:#777;flex:none}
.minimap{width:74px;height:14px;margin-left:24px;flex:none;background:repeating-linear-gradient(to bottom,#666 0 1px,transparent 1px 3px)}
.code-bell{position:absolute;right:0;top:1018px;width:23px;height:22px;background:#181818}
.code-bell svg{width:11px;height:13px;margin:5px 0 0 2px}

/* Chrome frame */
.chrome{position:absolute;top:0;width:960px;height:1040px;background:#fff;display:flex;flex-direction:column;font-family:"Noto Sans",sans-serif}
.win-left{left:0;border-left:1px solid #1d4a68;border-top:1px solid #3f5a70}
.win-pdf{left:937px;top:111px;height:929px}
.tabstrip{height:40px;flex:none;background:#d3e3fd;display:flex;align-items:flex-end;position:relative;color:#1f1f1f}
.win-left .tabstrip{height:39px}
.tabstrip.inactive{background:#dfe3eb}
.tab-menu{position:absolute;left:7px;top:6px;width:28px;height:28px;border-radius:8px;background:#e3ecfc;display:flex;align-items:center;justify-content:center}
.win-left .tab-menu{left:6px;top:5px}
.inactive .tab-menu{background:#eef0f4}
.tab-menu svg{width:12px;height:12px}
.tab{position:absolute;bottom:0;height:34px;display:flex;align-items:center;font-size:12px;color:#1f1f1f}
.tab-gh{left:48px;width:225px}
.tab-active,.tab-pdf{background:#fff;border-radius:10px 10px 0 0;width:232px}
.tab-active{left:278px}
.tab-pdf{left:43px}
.tab-active,.tab-pdf{padding-left:8px}
.fav{width:16px;height:16px;flex:none;fill:#1f1f1f}
.tab-title{margin-left:8px;width:167px;overflow:hidden;white-space:nowrap;font-size:12px;-webkit-mask-image:linear-gradient(to right,#000 88%,transparent);mask-image:linear-gradient(to right,#000 88%,transparent)}
.tab-x{width:11px;height:11px;margin-left:10px;color:#333;flex:none}
.tab-gh .tab-x{margin-left:12px;color:#555}
.tab-plus{position:absolute;left:521px;top:3px;font-size:20px;color:#333;line-height:28px}
.win-left .tab-plus{left:524px;top:5px}
.win-pdf .tab-plus{left:288px;top:5px}
.tab-plus.dim,.win-ctl.dim{color:#666}
.win-ctl{position:absolute;right:18px;top:14px;display:flex;gap:35px;color:#111}
.win-left .win-ctl{right:17px;top:13px}
.win-ctl svg{width:12px;height:12px}
.toolbar{height:46px;flex:none;background:#fff;display:flex;align-items:center;position:relative;padding-left:15px}
.tb{width:16px;height:16px;color:#444;margin-right:20px;flex:none}
.tb.gray{color:#9a9a9a}
.omni{position:relative;margin-left:-1px;width:752px;height:34px;border-radius:17px;background:#edf2fa;display:flex;align-items:center;padding-left:4px;flex:none;color:#333}
.omni-pdf{background:#eaeef7}
.chip{background:#fff;border-radius:13px;height:26px;display:flex;align-items:center;gap:4px;padding:0 6px;font-size:12.5px;color:#222;flex:none}
.chip svg{width:16px;height:16px}
.chip.round{width:24px;padding:0;justify-content:center}
.url{margin-left:8px;font-size:13.2px;color:#1f1f1f;white-space:nowrap}
.omni-pdf .url{margin-left:10px}
.omni-star{width:18px;height:18px;margin-left:auto;margin-right:14px;color:#333}
.omni-zoom{width:15px;height:15px;margin-left:auto;color:#333;margin-right:17px}
.omni-pdf .omni-star{margin-left:0;margin-right:14px}
.tb-profile{width:20px;height:20px;margin-left:17px;flex:none}
.tb-dots{width:4px;height:16px;margin-left:24px;color:#444;flex:none}

/* phpMyAdmin layout */
.viewport{flex:1;min-height:0;display:flex;flex-direction:column;font-family:"Liberation Sans",Arial,sans-serif}
.viewport-row{flex:1;min-height:0;display:flex}
.pma-nav{width:239px;flex:none;background:linear-gradient(to right,#f3f3f3,#dadcde);display:flex;flex-direction:column;align-items:stretch;color:#444}
.logo{font-size:26px;font-weight:700;font-style:italic;line-height:30px;margin-top:4px;text-align:center;letter-spacing:-.2px;height:32px}
.l-php{color:#6c78af}
.l-my{color:#f89c0e}
.nav-icons{display:flex;margin:5px 0 0 63px;gap:3px;height:18px;align-items:center}
.nav-icons svg{width:16px;height:16px;flex:none}
.g-nav{color:#aaa}
.nav-tabs{display:flex;gap:4px;margin:8px 0 0 11px}
.ntab{height:24px;line-height:22px;padding:0 5px;background:#eee;border:1px solid #ddd;border-radius:3px;box-shadow:0 1px 1px #ccc;font-size:13.1px;color:#3d4f5f}
.nav-tools{display:flex;align-items:center;gap:4px;margin:4px 0 0 181px;height:17px}
.ct{width:16px;height:18px}
.lk{width:14px;height:10px}
.tree{list-style:none;margin:2px 0 0;padding:0;position:relative;font-size:13.1px}
.tree::before{content:"";position:absolute;left:15px;top:12px;height:210px;border-left:1px solid #999}
.t-row{height:23.4px;display:flex;align-items:center;padding-left:9px;position:relative;color:#444}
.t-row::before{content:"";position:absolute;left:16px;width:14px;border-top:1px solid #999;top:50%}
.t-row.sub::before{left:37px;width:12px}
.t-row.sel::before{display:none}
.t-row a{color:#333;white-space:nowrap;position:relative}
.t-box{width:14px;height:14px;flex:none;position:relative;z-index:1}
.t-db{width:13px;height:16px;margin:0 6px 0 7px;position:relative;flex:none}
.t-row.sub{padding-left:49px}
.t-row.sub::after{content:"";position:absolute;left:36px;top:0;height:50%;border-left:1px solid #999}
.t-row.sel{margin-left:27px;padding-left:3px;background:rgba(0,0,0,.035)}
.t-row.sel::after{display:none}
.t-sheet{width:16px;height:17px;flex:none;margin-right:5px;position:relative}
.t-sheet.tight{margin-left:4px;margin-right:5px}
.t-plus{position:absolute;left:36px;top:13px;width:6px;height:6px;border-radius:50%;background:#59b042}
.t-plus.sm{left:60px}
.t-check{position:absolute;left:25px;top:8px;width:10px;height:5px;border-left:2px solid #3c9a3c;border-bottom:2px solid #3c9a3c;transform:rotate(-45deg)}
.splitter{width:4px;background:#aaa;flex:none}

.pma-main{flex:1;min-width:0;position:relative;display:flex;flex-direction:column;overflow:hidden;background:#fff}
.crumbs{height:23px;background:#888;display:flex;align-items:center;color:#fff;flex:none;margin-top:1px;text-shadow:1px 1px 1px #333;font-size:13.1px}
.crumb-back{width:14px;height:23px;background:#f4f4f4;color:#444;font-size:12px;line-height:22px;text-align:center;text-shadow:none;margin-right:15px;flex:none}
.c-ic{width:16px;height:16px;flex:none;margin-right:4px}
.c-ic.dbi{width:12px;margin-left:10px;margin-right:6px}
.c-ic.tbi{margin-left:8px;margin-right:3px}
.c-srv{width:102px;white-space:nowrap}
.c-dbn{width:105px;white-space:nowrap}
.c-sep{margin:0 0 0 9px;font-size:13px}
.c-dbn + .c-sep{margin-left:7px}
.c-gear{width:16px;height:16px;color:#c2c2c2;margin-left:auto;margin-right:8px}
.c-coll{width:14px;height:14px;margin-right:2px}
.menubar{height:34px;flex:none;background:linear-gradient(#fff,#e6e6e6);position:relative}
.burger{width:50px;height:33px;margin-left:1px;border:1px solid #ddd;border-top:0;border-radius:0 12px 12px 12px/0 12px 12px 14px;background:linear-gradient(#fff,#eaeaea);display:flex;flex-direction:column;justify-content:center;gap:4px;padding:0 14px}
.burger i{display:block;height:2px;background:#2f6a94}
.pma-content{flex:1;min-height:0;overflow:hidden;padding:0 0 0 4px;display:flex;flex-direction:column;align-items:flex-start}
.pill{margin:20px 0 0 10px;height:29px;width:144px;border:1px solid #aaa;border-radius:14px;background:linear-gradient(#fff,#e6e6e6);font:13.1px "Liberation Sans",Arial,sans-serif;color:#111;padding:0;box-shadow:0 1px 1px #ccc;flex:none}
.msg-ok{margin-top:13px;width:689px;height:36px;background:#e8f5a4;border:1px solid #a9d35d;border-bottom:0;border-radius:5px 5px 0 0;display:flex;align-items:center;color:#111;padding:3px 0 0 13px;gap:4px;flex:none}
.msg-ok svg{width:16px;height:14px;margin-top:2px}
.sql{width:689px;height:66px;background:#e5e5e5;padding:13px 0 0 13px;display:flex;flex-direction:column;gap:0;flex:none}
.sql code{font-family:"DejaVu Sans Mono",monospace;font-size:12px;line-height:20px;color:#444;white-space:nowrap}
.sql b{font-weight:400}
.kw{color:#708}
.fn{color:#708}
.u{border-bottom:1px dotted #111}
.str{color:#a11}
.op{color:#f0f}
.par{color:#999}
.sql-links{width:689px;height:30px;line-height:29px;background:#d7dfe6;border-radius:0 0 6px 6px;text-align:right;padding-right:2px;color:#111;white-space:nowrap;flex:none}
.sql-links a{color:#2a6a9a}
.prof-cb{margin:0 7px 0 0;width:13px;height:13px;vertical-align:-2px}
.pager{margin-top:10px;width:701px;height:42px;background:linear-gradient(#f3f3f3,#cccccc);border-radius:6px 0 0 6px;display:flex;align-items:center;padding-left:34px;color:#555;font-size:13.5px;flex:none}
.sel-page,.sel-rows{height:24px;font:14px "Liberation Sans",Arial,sans-serif;background:#fff;border:1px solid #ccc;border-radius:2px;color:#333;padding-left:4px;flex:none}
.sel-page{width:36px}
.sel-rows{width:50px;margin-left:11px}
.pg-btns{display:flex;margin-left:10px;height:34px;align-items:center;color:#333;flex:none}
.pg-btns span{width:26px;height:34px;line-height:32px;text-align:center;border-left:1px solid #ddd;border-right:1px solid #ddd;background:rgba(0,0,0,.02)}
.pg-btns span + span{width:32px;border-left:0}
.pg-sep{display:block;width:1px;height:26px;background:#aaa;border-right:1px solid #eee;box-sizing:content-box;flex:none}
.sp1{margin:0 16px 0 10px}
.sp2{margin:0 9px 0 11px}
.pg-cb{margin:0 10px 0 0;width:13px;height:13px;flex:none}
.pg-t{white-space:nowrap}
.filter{margin-left:34px;margin-top:-2px}
.filter-in{margin-left:9px;flex:none;width:200px;height:29px;margin-top:-4px;border:1px solid #bbb;padding:0 4px;font:14px "Liberation Sans",Arial,sans-serif;background:#fff;color:#333}
.filter-in::placeholder{color:#666}
.extra{margin-top:10px;width:85px;height:24px;border:1px solid #aaa;border-radius:3px;background:linear-gradient(#fff,#e6e6e6);font:11.5px "Liberation Sans",Arial,sans-serif;color:#111;padding:0;box-shadow:0 1px 1px #ccc;flex:none}
.grid{margin-top:17px;width:454px;flex:none}
.row{display:grid;grid-template-columns:40px 55px 62px 60px 89px 109px 39px;height:27.5px;align-items:center;white-space:nowrap}
.row:nth-child(odd){background:#dfdfdf}
.row:nth-child(even){background:#fff}
.row.head{grid-template-columns:217px 89px 109px 39px;height:22px;background:linear-gradient(#fff,#ccc)}
.h-actions{height:22px;display:flex;align-items:center;justify-content:space-between;padding:0 3px 0 5px;border-right:1px solid #f4f4f4}
.t-arrows{width:47px;height:16px}
.sort{width:0;height:0;border-left:5px solid transparent;border-right:5px solid transparent;border-top:6px solid #444}
.h-c{font-weight:700;color:#235a81;padding-left:5px;height:22px;line-height:22px;border-right:1px solid #f4f4f4;font-size:13.1px}
.h-c:last-child{border-right:0}
.c-cb{padding-left:9px;display:flex;align-items:center}
.c-cb input{margin:0;width:13px;height:13px}
.ac{display:flex;align-items:center;color:#235a81;padding-bottom:1px}
.ac svg{flex:none;transform:translateY(1px)}
.ed svg{width:16px;height:18px;margin-right:4px}
.cp svg{width:15px;height:18px;margin-right:4px}
.dl svg{width:14px;height:14px;margin-right:5px}
.d{color:#444;padding-bottom:1px}
.n{padding-left:5px}
.dt{padding-left:4px}
.num{text-align:right;padding-right:4px}
.console{position:absolute;left:0;bottom:0;width:78px;height:21px;background:linear-gradient(#d3d3d3,#c0c0c0);border:1px solid #aaa;border-bottom:0;border-left:0;display:flex;align-items:center;padding-left:8px;gap:7px;color:#333;font-size:13.1px}
.con-ic{display:block;width:12px;height:12px;background:linear-gradient(135deg,#999,#111);box-shadow:0 0 0 1px #ddd}
.vbar{width:15px;flex:none;background:#fafafa;position:relative}
.arr-up{position:absolute;left:3px;top:5px;border-left:4px solid transparent;border-right:4px solid transparent;border-bottom:6px solid #888}
.arr-down{position:absolute;left:3px;bottom:6px;border-left:4px solid transparent;border-right:4px solid transparent;border-top:6px solid #888}
.thumb-bar{position:absolute;left:3px;width:9px;background:#8d8d8d;border-radius:5px}
.main-v .arr-up{top:8px}
.tb3{top:19px;height:576px}
.hbar{height:16px;flex:none;background:#fff;position:relative}
.hthumb{position:absolute;left:19px;top:3px;width:691px;height:9px;background:#8a8a8a;border-radius:5px}
.arr-l{position:absolute;left:5px;top:4px;border-top:4px solid transparent;border-bottom:4px solid transparent;border-right:5px solid #999}
.arr-r{position:absolute;left:933px;top:4px;border-top:4px solid transparent;border-bottom:4px solid transparent;border-left:5px solid #888}

/* PDF viewer */
.pdfbar{height:53px;flex:none;background:#3b3c3e;color:#f1f1f1;position:relative;font-family:"Noto Sans",sans-serif}
.pdfbar > *{position:absolute}
.pdf-burger{left:26px;top:22px;width:14px;height:11px;border-top:2px solid #ddd;border-bottom:2px solid #ddd}
.pdf-burger::after{content:"";display:block;margin-top:2.5px;height:2px;background:#ddd}
.pdf-title{left:66px;top:18px;font-size:13px;font-weight:700;white-space:nowrap}
.pdf-page{left:280px;top:18px;width:24px;height:20px;background:#1c1d1e;text-align:center;font-size:12.5px;line-height:20px}
.pdf-of{left:309px;top:19px;font-size:12.5px}
.pdf-sep{top:17px;width:1px;height:24px;background:#6a6b6d}
.s1{left:352px}.s2{left:478px}.s3{left:566px}.s4{left:612px}
.pdf-btn{top:14px;font-size:18px;line-height:26px;font-weight:400}
.pm{left:368px}.pp{left:451px}
.pdf-zoom{left:393px;top:18px;width:44px;height:22px;background:#1c1d1e;text-align:center;font-size:12.5px;line-height:22px}
.pdf-ic{width:18px;height:18px;top:20px}
.a1{left:497px}.a2{left:528px}.a3{left:579px}.a4{left:626px;width:15px;height:15px;top:22px}.a5{left:659px;width:15px;height:15px;top:22px}
.a6{left:848px}.a7{left:882px}.a8{left:926px;width:4px;height:16px;top:21px}
.faint{color:#777}
.pdf-body{flex:1;min-height:0;display:flex;background:#282a2c;border-top:4px solid #3b3c3e}
.thumbs{width:287px;flex:none;background:#282a2c;display:flex;flex-direction:column;align-items:center;padding:24px 0 0 4px;overflow:hidden;color:#fff}
.thumb{width:108px;height:152px;flex:none}
.thumb.current{outline:6px solid #8ab4f8}
.tpage{width:108px;height:152px;background:#fff;position:relative;overflow:hidden;filter:blur(.4px)}
.tnum{height:49px;flex:none;text-align:center;font-size:13px;padding-top:13px;font-family:"Liberation Sans",sans-serif}
.tl{position:absolute;left:7px;right:7px;background:repeating-linear-gradient(to bottom,#e2e2e2 0 1px,transparent 1px 3.5px)}
.tl.dark{background:repeating-linear-gradient(to bottom,#bdbdbd 0 1px,transparent 1px 3.5px)}
.tl-a{top:5px;height:22px}.tl-a2{top:30px;height:30px}.tl-b{top:90px;height:52px}
.tl-c{top:6px;height:8px;left:20px}.tl-d{top:91px;height:44px;right:20px}
.tl-e{top:5px;height:44px}.tl-e2{top:54px;height:40px}.tl-e3{top:100px;height:44px;right:24px}
.tl-f{top:5px;height:36px;right:28px}.tl-g{top:112px;height:32px;right:40px}
.ttable{position:absolute;left:43px;top:63px;width:21px;height:20px;background:repeating-linear-gradient(to bottom,#ddd 0 3px,#f6f6f6 3px 6px)}
.tyellow{position:absolute;left:7px;top:36px;width:96px;height:50px;background:#ffe9b8}
.tgreen{position:absolute;left:24px;top:8px;width:72px;height:34px;background:#e2edd8;border:1px solid #c4d4b8}
.tgrid{position:absolute;left:5px;top:48px;width:98px;height:60px;background:repeating-linear-gradient(to bottom,#aaa 0 1px,#fff 1px 4px);border:1px solid #888}
.vbar.narrow{width:16px}
.vbar.narrow .arr-up{left:4px;top:5px}
.tb1{top:112px;height:420px;left:3px;width:9px}
.tb2{top:155px;height:94px;left:3px;width:9px}
.pages{flex:1;min-width:0;padding:0 4px;overflow:hidden;background:#282a2c}
.page{background:#fff;color:#111;font-family:"Liberation Sans",Arial,sans-serif;font-size:11.8px;display:flex;flex-direction:column;width:634px;overflow:hidden;filter:blur(.25px)}
.page1{height:506px;margin-bottom:11px}
.page2{height:280px}
.schema{width:118px;margin-left:252px;border-top:2px solid #8cc4ee;border-bottom:1px solid #bbb;border-left:1px solid #ccc;border-right:1px solid #ccc;font-size:9.6px;flex:none}
.sc{height:16px;line-height:15px;padding-left:12px;position:relative;color:#333;white-space:nowrap}
.sc i{position:absolute;left:4px;top:5px;width:5px;height:6px;background:#bbb;border-radius:2px}
.sc i.k1{background:#b9a24a}
.sc i.k2{background:#6a78c0}
.sc.pink{background:#fbe3df}
.sc.grey{background:#dcdcdc}
.caption{height:20px;line-height:20px;text-align:center;font-weight:700;margin-top:9px}
.ln{height:14px;line-height:14px;white-space:nowrap;flex:none}
.lead{margin-top:15px;margin-left:37px;height:16px;line-height:16px}
.g0{margin-top:0}.g1{margin-top:1px}.g2{margin-top:2px}.g3{margin-top:3px}.g4{margin-top:4px}.g5{margin-top:5px}.g6{margin-top:6px}.g7{margin-top:7px}
.li{margin-left:76px;position:relative;width:524px}
.li::before{content:"–";position:absolute;left:-18px;top:0}
.cont{margin-left:76px;width:524px}
.q1{margin-left:96px;width:504px}
.q2{margin-left:114px}
.q3{margin-left:100px}
.just{white-space:normal;text-align:justify;text-align-last:justify}
.right{width:596px;text-align:right}
.r1{margin-top:33px}
.witryna{margin:125px 0 0 36px;font-weight:700;height:16px;line-height:16px}
.shot{margin:-1px 0 0 41px;width:559px;height:60px;background:#fed56c;position:relative;flex:none}
.shot-title{text-align:center;font-weight:700;color:#fff;padding-top:17px;font-size:10.4px;text-shadow:1px 1px 2px #443;line-height:14px}
.shot-green{position:absolute;left:140px;right:0;top:47px;height:14px;background:#b3c99a;box-shadow:0 -1px 2px #554}

/* Taskbar */
.taskbar{position:absolute;left:0;top:1040px;width:1920px;height:40px;background:linear-gradient(to right,#1f333c 0,#1f343d 50%,#2d3a3e 60%,#393b3e 63%,#4e4639 69%,#3d4136 74%,#3a3f36 100%);display:flex;align-items:center;font-family:"Noto Sans",sans-serif;color:#fff;z-index:5}
.start{width:16px;height:16px;margin-left:16px;flex:none}
.search{margin-left:16px;width:344px;height:40px;background:#f0f0f0;border-top:1px solid #ccc;display:flex;align-items:center;padding-left:12px;color:#222;font-size:14px;flex:none}
.search svg{width:16px;height:16px;margin-right:12px}
.task-view{width:16px;height:18px;margin-left:16px;flex:none}
.apps{display:flex;height:40px;margin-left:18px}
.app{display:flex;width:49px;height:40px;align-items:center;justify-content:center;position:relative;flex:none}
.app svg{width:24px;height:24px}
.pin::after,.pin-wide::after{content:"";position:absolute;bottom:0;height:2px;left:4px;right:4px;background:#76b9ed}
.pin-wide::after{left:0;right:0}
.app.active{background:#4a585e}
.tray{margin-left:auto;display:flex;align-items:center;height:40px;position:relative;padding-right:5px}
.tr-up{width:12px;height:8px;margin-right:10px}
.tr-net{width:16px;height:16px;margin-right:8px}
.tr-vol{width:15px;height:15px}
.clock{display:flex;flex-direction:column;align-items:center;width:64px;margin-left:6px;font-size:12px;line-height:17px}
.notif{position:relative;width:20px;height:20px;margin-left:13px;margin-right:15px}
.notif svg{width:16px;height:16px}
.badge{position:absolute;left:9px;top:6px;width:16px;height:16px;border-radius:50%;background:#333;border:1px solid #bbb;font-size:11px;line-height:14px;text-align:center;font-weight:700}
.showdesk{display:block;width:1px;height:40px;background:#5d6560}
```
